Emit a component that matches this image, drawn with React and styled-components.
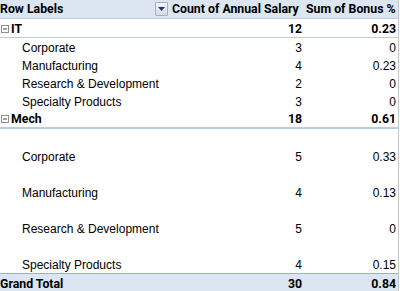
import styled, { createGlobalStyle, css } from 'styled-components';

const GlobalStyle = createGlobalStyle`
  html, body {
    margin: 0;
    padding: 0;
    background: #ffffff;
  }
  body {
    font-family: 'Liberation Sans', Arial, sans-serif;
    font-size: 12px;
    color: #000000;
  }
`;

const COLS = '170px 134px 94px';

const boldText = css`
  font-family: Roboto, 'Liberation Sans', sans-serif;
  font-weight: bold;
  font-size: 12.3px;
`;

const rows = [
  { label: 'IT', count: 12, bonus: '0.23', type: 'group' },
  { label: 'Corporate', count: 3, bonus: '0', type: 'item' },
  { label: 'Manufacturing', count: 4, bonus: '0.23', type: 'item' },
  { label: 'Research & Development', count: 2, bonus: '0', type: 'item' },
  { label: 'Specialty Products', count: 3, bonus: '0', type: 'item' },
  { label: 'Mech', count: 18, bonus: '0.61', type: 'group', thick: true },
  { label: 'Corporate', count: 5, bonus: '0.33', type: 'item', tall: true },
  { label: 'Manufacturing', count: 4, bonus: '0.13', type: 'item', tall: true },
  { label: 'Research & Development', count: 5, bonus: '0', type: 'item', tall: true },
  { label: 'Specialty Products', count: 4, bonus: '0.15', type: 'item', tall: true },
];

const CollapseIcon = () => (
  <svg width="8" height="8" viewBox="0 0 8 8">
    <rect x="0.5" y="0.5" width="7" height="7" fill="#ffffff" stroke="#8e8e8e" />
    <line x1="2" y1="4" x2="6" y2="4" stroke="#444" strokeWidth="1" />
  </svg>
);

const App = () => {
  return (
    <>
      <GlobalStyle />
      <Pivot>
        <HeaderRow>
          <LabelCell>
            <span>Row Labels</span>
            <FilterButton>
              <svg width="7" height="4" viewBox="0 0 7 4">
                <path d="M0 0 H7 L3.5 4 Z" fill="#1f3a6e" />
              </svg>
            </FilterButton>
          </LabelCell>
          <HeadCell>Count of Annual Salary</HeadCell>
          <HeadCell>Sum of Bonus %</HeadCell>
        </HeaderRow>
        {rows.map((r, i) =>
          r.type === 'group' ? (
            <GroupRow key={i} $thick={r.thick}>
              <GroupLabel>
                <CollapseIcon />
                {r.label}
              </GroupLabel>
              <ValueCell>{r.count}</ValueCell>
              <ValueCell>{r.bonus}</ValueCell>
            </GroupRow>
          ) : (
            <ItemRow key={i} $tall={r.tall}>
              <ItemLabel>{r.label}</ItemLabel>
              <ValueCell>{r.count}</ValueCell>
              <ValueCell>{r.bonus}</ValueCell>
            </ItemRow>
          ),
        )}
        <TotalRow>
          <LabelCell>Grand Total</LabelCell>
          <ValueCell>30</ValueCell>
          <ValueCell>0.84</ValueCell>
        </TotalRow>
      </Pivot>
    </>
  );
};

const Pivot = styled.div`
  width: 398px;
  border-right: 1px solid #c6c6c6;
  height: 291px;
  overflow: hidden;
`;

const BaseRow = styled.div`
  display: grid;
  grid-template-columns: ${COLS};
  align-items: end;
  box-sizing: border-box;
`;

const HeaderRow = styled(BaseRow)`
  ${boldText};
  height: 19px;
  background: #dce6f1;
  border-bottom: 1px solid #b8cce4;
  align-items: center;
`;

const GroupRow = styled(BaseRow)`
  ${boldText};
  height: 19px;
  border-bottom: ${(p) => (p.$thick ? '2px' : '1px')} solid #b8cce4;
  padding-bottom: 1px;
`;

const ItemRow = styled(BaseRow)`
  height: ${(p) => (p.$tall ? '36px' : '18px')};
  padding-bottom: 1px;
`;

const TotalRow = styled(BaseRow)`
  ${boldText};
  height: 20px;
  background: #dce6f1;
  border-top: 1px solid #95b3d7;
  align-items: center;
`;

const LabelCell = styled.div`
  display: flex;
  align-items: center;
  justify-content: space-between;
  padding-right: 2px;
  white-space: nowrap;
`;

const GroupLabel = styled.div`
  display: flex;
  align-items: center;
  gap: 2px;
  padding-left: 1px;
  white-space: nowrap;
`;

const ItemLabel = styled.div`
  padding-left: 22px;
  white-space: nowrap;
`;

const HeadCell = styled.div`
  padding-left: 2px;
  white-space: nowrap;
`;

const ValueCell = styled.div`
  text-align: right;
  padding-right: 2px;
  white-space: nowrap;
`;

const FilterButton = styled.span`
  display: inline-flex;
  align-items: center;
  justify-content: center;
  width: 13px;
  height: 14px;
  box-sizing: border-box;
  border: 1px solid #a3afc4;
  border-radius: 1px;
  background: linear-gradient(#f4f6fa, #d3dbe8);
`;

export default App;
